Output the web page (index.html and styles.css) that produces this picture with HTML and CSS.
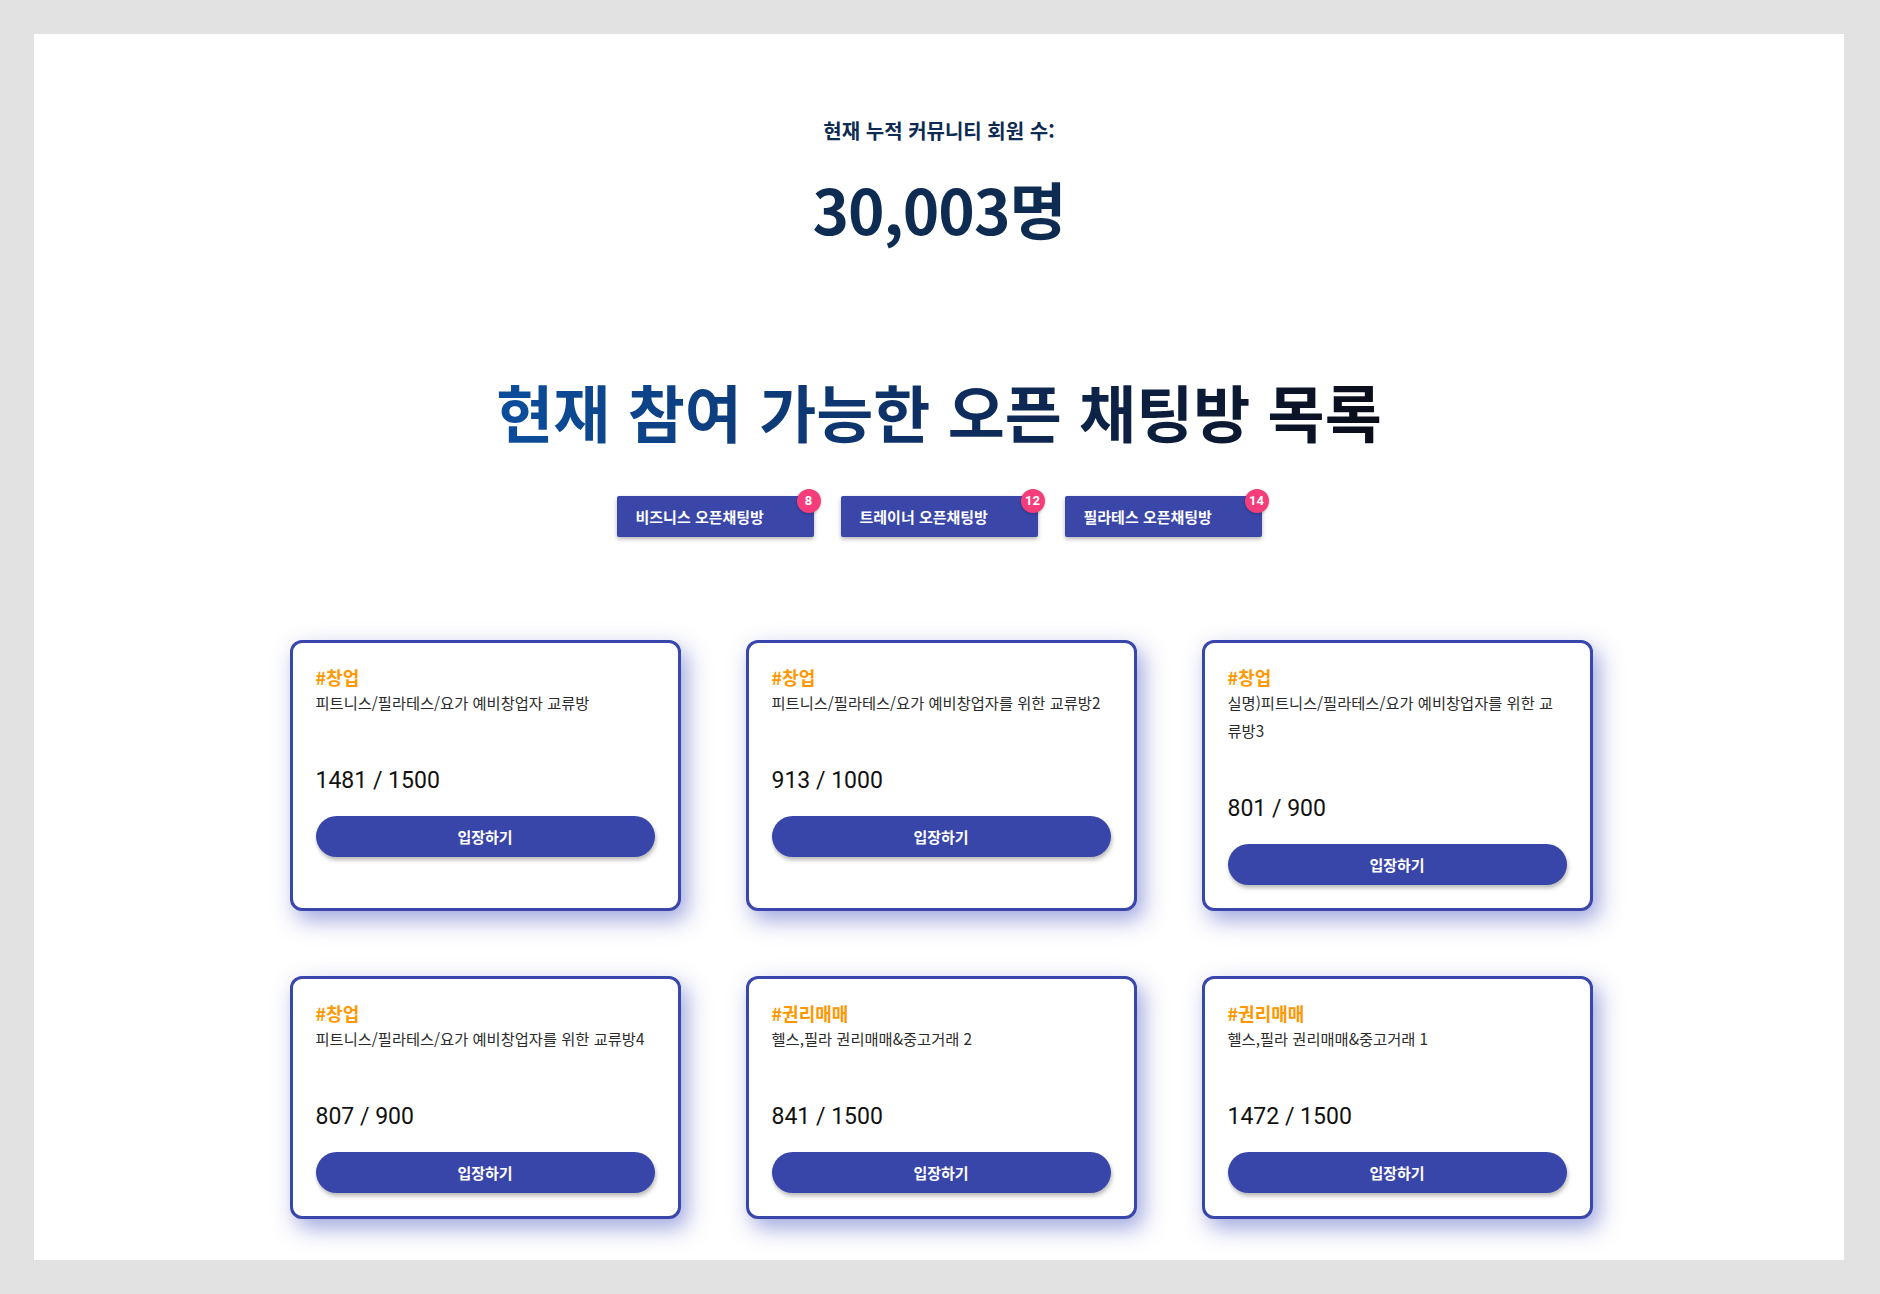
FILE: index.html
```html
<!DOCTYPE html>
<html lang="ko">
<head>
<meta charset="utf-8">
<title>오픈 채팅방 목록</title>
<link rel="stylesheet" href="styles.css">
</head>
<body>
<main class="panel">
  <section class="stats">
    <p class="stats-label">현재 누적 커뮤니티 회원 수:</p>
    <p class="stats-number">30,003명</p>
  </section>

  <h1 class="title"><span class="title-text">현재 참여 가능한 오픈 채팅방 목록</span></h1>

  <nav class="tabs">
    <button class="tab">비즈니스 오픈채팅방<span class="badge">8</span></button>
    <button class="tab">트레이너 오픈채팅방<span class="badge">12</span></button>
    <button class="tab">필라테스 오픈채팅방<span class="badge">14</span></button>
  </nav>

  <section class="cards">
    <article class="card">
      <div class="tag">#창업</div>
      <p class="desc">피트니스/필라테스/요가 예비창업자 교류방</p>
      <p class="count">1481 / 1500</p>
      <button class="enter">입장하기</button>
    </article>
    <article class="card">
      <div class="tag">#창업</div>
      <p class="desc">피트니스/필라테스/요가 예비창업자를 위한 교류방2</p>
      <p class="count">913 / 1000</p>
      <button class="enter">입장하기</button>
    </article>
    <article class="card">
      <div class="tag">#창업</div>
      <p class="desc">실명)피트니스/필라테스/요가 예비창업자를 위한 교류방3</p>
      <p class="count">801 / 900</p>
      <button class="enter">입장하기</button>
    </article>
    <article class="card">
      <div class="tag">#창업</div>
      <p class="desc">피트니스/필라테스/요가 예비창업자를 위한 교류방4</p>
      <p class="count">807 / 900</p>
      <button class="enter">입장하기</button>
    </article>
    <article class="card">
      <div class="tag">#권리매매</div>
      <p class="desc">헬스,필라 권리매매&amp;중고거래 2</p>
      <p class="count">841 / 1500</p>
      <button class="enter">입장하기</button>
    </article>
    <article class="card">
      <div class="tag">#권리매매</div>
      <p class="desc">헬스,필라 권리매매&amp;중고거래 1</p>
      <p class="count">1472 / 1500</p>
      <button class="enter">입장하기</button>
    </article>
  </section>
</main>
</body>
</html>
```

FILE: styles.css
```css
* { box-sizing: border-box; }

html, body {
  margin: 0;
  padding: 0;
}

body {
  background: #e2e2e2;
  padding: 34px 36px 34px 34px;
  font-family: "Noto Sans CJK KR", "Noto Sans", sans-serif;
}

.panel {
  background: #ffffff;
  height: 1226px;
  padding-top: 84px;
  display: flex;
  flex-direction: column;
  align-items: center;
}

.stats {
  text-align: center;
  color: #0e2b52;
}

.stats-label {
  margin: 0;
  font-size: 20px;
  line-height: 26px;
  font-weight: 700;
}

.stats-number {
  margin: 27px 0 0;
  font-size: 62px;
  line-height: 74px;
  font-weight: 700;
  letter-spacing: -1px;
}

.title {
  margin: 129px 0 0;
  font-size: 62px;
  line-height: 74px;
  font-weight: 700;
}

.title-text {
  display: inline-block;
  background: linear-gradient(90deg, #0c4d9c 0%, #0e2f62 50%, #0a0d18 100%);
  -webkit-background-clip: text;
  background-clip: text;
  color: transparent;
}

.tabs {
  margin-top: 48px;
  display: flex;
  gap: 27px;
}

.tab {
  position: relative;
  width: 197px;
  height: 41px;
  border: none;
  border-radius: 2px;
  background: #3a47a9;
  color: #ffffff;
  font-family: inherit;
  font-size: 15px;
  font-weight: 700;
  text-align: left;
  padding: 0 0 0 19px;
  box-shadow: 0 2px 4px rgba(0, 0, 0, 0.3);
}

.badge {
  position: absolute;
  top: -7px;
  right: -7px;
  width: 24px;
  height: 24px;
  border-radius: 50%;
  background: #f43d7a;
  color: #ffffff;
  font-family: "Roboto", sans-serif;
  font-size: 13px;
  font-weight: 700;
  line-height: 24px;
  text-align: center;
  box-shadow: 0 1px 3px rgba(0, 0, 0, 0.25);
}

.cards {
  margin-top: 103px;
  margin-left: 4px;
  display: grid;
  grid-template-columns: repeat(3, 391px);
  column-gap: 65px;
  row-gap: 65px;
}

.card {
  border: 3px solid #3946ab;
  border-radius: 12px;
  background: #ffffff;
  padding: 23px 23px 23px 23px;
  box-shadow: 6px 9px 22px rgba(63, 78, 190, 0.5);
  display: flex;
  flex-direction: column;
}

.tag {
  color: #ff9800;
  font-size: 18px;
  line-height: 22px;
  font-weight: 700;
}

.desc {
  margin: 0;
  color: #2b2b2b;
  font-size: 15.3px;
  line-height: 28px;
}

.count {
  margin: 50px 0 0;
  font-family: "Roboto", "Noto Sans", sans-serif;
  font-size: 23px;
  line-height: 30px;
  color: #111111;
}

.enter {
  margin-top: 20px;
  height: 41px;
  width: 100%;
  border: none;
  border-radius: 21px;
  background: #3946a9;
  color: #ffffff;
  font-family: inherit;
  font-size: 15px;
  font-weight: 700;
  box-shadow: 1px 3px 4px rgba(0, 0, 0, 0.28);
}
```
